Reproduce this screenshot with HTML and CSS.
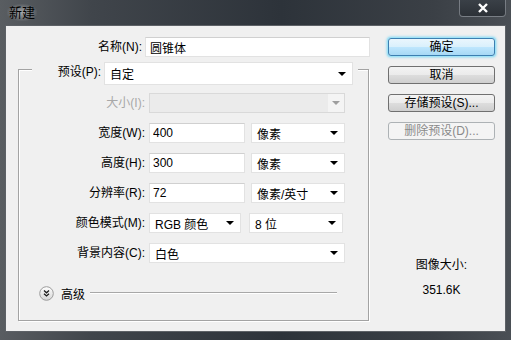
FILE: index.html
```html
<!DOCTYPE html>
<html lang="zh">
<head>
  <meta charset="UTF-8">
  <title>新建</title>
  <link rel="stylesheet" href="styles.css">
</head>
<body>

  <div class="window">
    <div class="titlebar">
      <span class="title">新建</span>
      <span class="close">
        <svg width="12" height="10" viewBox="0 0 12 10"><path d="M2 1 L10 9 M10 1 L2 9" stroke="#fff" stroke-width="2.4" fill="none"/></svg>
      </span>
    </div>

    <div class="client">
      <div class="main">
        <div class="name-row">
          <label>名称(N):</label>
          <input type="text" class="field name-field" value="圆锥体">
        </div>

        <div class="group">
          <div class="preset-row">
            <label>预设(P):</label>
            <div class="select preset-select"><span>自定</span><span class="arrow"></span></div>
          </div>

          <div class="row disabled">
            <label>大小(I):</label>
            <div class="select full"><span></span><span class="drop"><span class="arrow"></span></span></div>
          </div>

          <div class="row">
            <label>宽度(W):</label>
            <input type="text" class="field num" value="400">
            <div class="select unit"><span>像素</span><span class="arrow"></span></div>
          </div>

          <div class="row">
            <label>高度(H):</label>
            <input type="text" class="field num" value="300">
            <div class="select unit"><span>像素</span><span class="arrow"></span></div>
          </div>

          <div class="row">
            <label>分辨率(R):</label>
            <input type="text" class="field num" value="72">
            <div class="select unit"><span>像素/英寸</span><span class="arrow"></span></div>
          </div>

          <div class="row">
            <label>颜色模式(M):</label>
            <div class="select mode"><span>RGB 颜色</span><span class="arrow"></span></div>
            <div class="select unit"><span>8 位</span><span class="arrow"></span></div>
          </div>

          <div class="row">
            <label>背景内容(C):</label>
            <div class="select full"><span>白色</span><span class="arrow"></span></div>
          </div>

          <div class="advanced">
            <svg class="expand" width="15" height="15" viewBox="0 0 15 15">
              <defs>
                <linearGradient id="knob" x1="0" y1="0" x2="0" y2="1">
                  <stop offset="0" stop-color="#ffffff"/>
                  <stop offset="1" stop-color="#d6d6d6"/>
                </linearGradient>
              </defs>
              <circle cx="7.5" cy="7.5" r="6.8" fill="url(#knob)" stroke="#9c9c9c"/>
              <path d="M5 4.6 L7.5 6.8 L10 4.6 M5 7.8 L7.5 10 L10 7.8" stroke="#1c1c1c" stroke-width="1.3" fill="none"/>
            </svg>
            <span>高级</span>
            <span class="rule"></span>
          </div>
        </div>
      </div>

      <div class="side">
        <button type="button" class="btn default">确定</button>
        <button type="button" class="btn">取消</button>
        <button type="button" class="btn">存储预设(S)...</button>
        <button type="button" class="btn" disabled>删除预设(D)...</button>

        <div class="info">
          <p>图像大小:</p>
          <p>351.6K</p>
        </div>
      </div>
    </div>
  </div>

</body>
</html>
```

FILE: styles.css
```css
body {
  margin: 0;
  font-family: "Liberation Sans", "Noto Sans CJK SC", sans-serif;
  font-size: 12px;
  color: #000;
  background-color: #2f353b;
}

.window {
  width: 511px;
  height: 340px;
  background: linear-gradient(90deg, #595d61 0%, #40454b 18%, #2d333a 55%, #3b4046 85%, #4a4f55 100%);
  overflow: hidden;
}

.titlebar {
  height: 25px;
  display: flex;
  align-items: flex-start;
  justify-content: space-between;
}

.title {
  margin: 4px 0 0 7px;
  padding: 0 2px;
  font-size: 13px;
  line-height: 17px;
  color: #000;
  background: radial-gradient(ellipse at center, rgba(230, 232, 235, 0.55) 0%, rgba(230, 232, 235, 0) 75%);
}

.close {
  width: 45px;
  height: 16px;
  margin-right: 5px;
  display: flex;
  align-items: center;
  justify-content: center;
  border: 1px solid rgba(200, 205, 210, 0.45);
  border-top: none;
  border-radius: 0 0 4px 4px;
  background: linear-gradient(#3a4047, #2c3137);
}

.client {
  height: 305px;
  margin: 0 5px;
  border: 1px solid #5d6166;
  background-color: #f0f0f0;
  display: flex;
}

label {
  line-height: 20px;
  text-align: right;
  white-space: nowrap;
}

.main {
  width: 369px;
}

.name-row {
  display: flex;
  margin-top: 11px;
  gap: 3px;
}

.name-row label {
  width: 136px;
}

.field {
  height: 20px;
  box-sizing: border-box;
  margin: 0;
  padding: 0 3px;
  border: 1px solid #e2e2e2;
  border-top-color: #d0d0d0;
  background-color: #fff;
  font-family: inherit;
  font-size: 12px;
  color: #000;
  outline: none;
}

.name-field {
  width: 225px;
  padding-left: 4px;
}

.group {
  width: 349px;
  margin: 12px 0 0 12px;
  border: 1px solid #a3a3a3;
  box-shadow: inset 1px 1px 0 #fff, 1px 1px 0 #fff;
  padding-bottom: 19px;
}

.preset-row {
  display: flex;
  gap: 3px;
  width: 326px;
  margin: -8px 0 0 13px;
  background-color: #f0f0f0;
}

.preset-row label {
  width: 69px;
}

.select {
  height: 20px;
  box-sizing: border-box;
  display: flex;
  align-items: center;
  justify-content: space-between;
  padding: 0 6px 0 5px;
  border: 1px solid #e2e2e2;
  background-color: #fff;
  white-space: nowrap;
}

.arrow {
  width: 0;
  height: 0;
  border-left: 4px solid transparent;
  border-right: 4px solid transparent;
  border-top: 4px solid #000;
}

.preset-select {
  width: 249px;
  height: 23px;
}

.row {
  display: flex;
  gap: 4px;
  margin-top: 10px;
}

.preset-row + .row {
  margin-top: 8px;
}

.row label {
  width: 126px;
}

.full {
  width: 196px;
}

.num {
  width: 96px;
}

.unit {
  width: 94px;
  margin-left: 2px;
}

.mode {
  width: 92px;
  margin-right: 4px;
}

.mode + .unit {
  margin-left: 0;
}

.disabled label {
  color: #a8a8a8;
}

.disabled .select {
  background-color: #ebebeb;
  border-color: #d9d9d9;
  padding: 0;
}

.drop {
  width: 16px;
  height: 18px;
  display: flex;
  align-items: center;
  justify-content: center;
  background-color: #f4f4f4;
}

.disabled .arrow {
  border-top-color: #9e9e9e;
}

.advanced {
  display: flex;
  align-items: center;
  height: 16px;
  margin: 22px 31px 0 20px;
}

.expand {
  margin-right: 7px;
}

.rule {
  flex: 1;
  height: 0;
  margin-left: 5px;
  border-top: 1px solid #a8a8a8;
  border-bottom: 1px solid #fff;
}

.side {
  width: 107px;
  margin-left: 13px;
  padding-top: 12px;
  display: flex;
  flex-direction: column;
  gap: 10px;
}

.btn {
  height: 18px;
  padding: 0;
  border: 1px solid #707070;
  border-radius: 3px;
  background: linear-gradient(#f3f3f3 0%, #ebebeb 50%, #dddddd 51%, #cfcfcf 100%);
  font-family: inherit;
  font-size: 12px;
  line-height: 16px;
  color: #000;
}

.btn.default {
  border-color: #3c7fb1;
  background: linear-gradient(#eaf6fd 0%, #d9f0fc 50%, #bee6fd 51%, #a7d9f5 100%);
  box-shadow: 0 0 0 1px #9fe3f7, 0 0 3px 1px #6fd0f2;
}

.btn:disabled {
  border-color: #adb2b5;
  background: #f4f4f4;
  color: #8a8a8a;
}

.info {
  margin-top: 107px;
  text-align: center;
}

.info p {
  margin: 0 0 9px;
  line-height: 16px;
}
```
